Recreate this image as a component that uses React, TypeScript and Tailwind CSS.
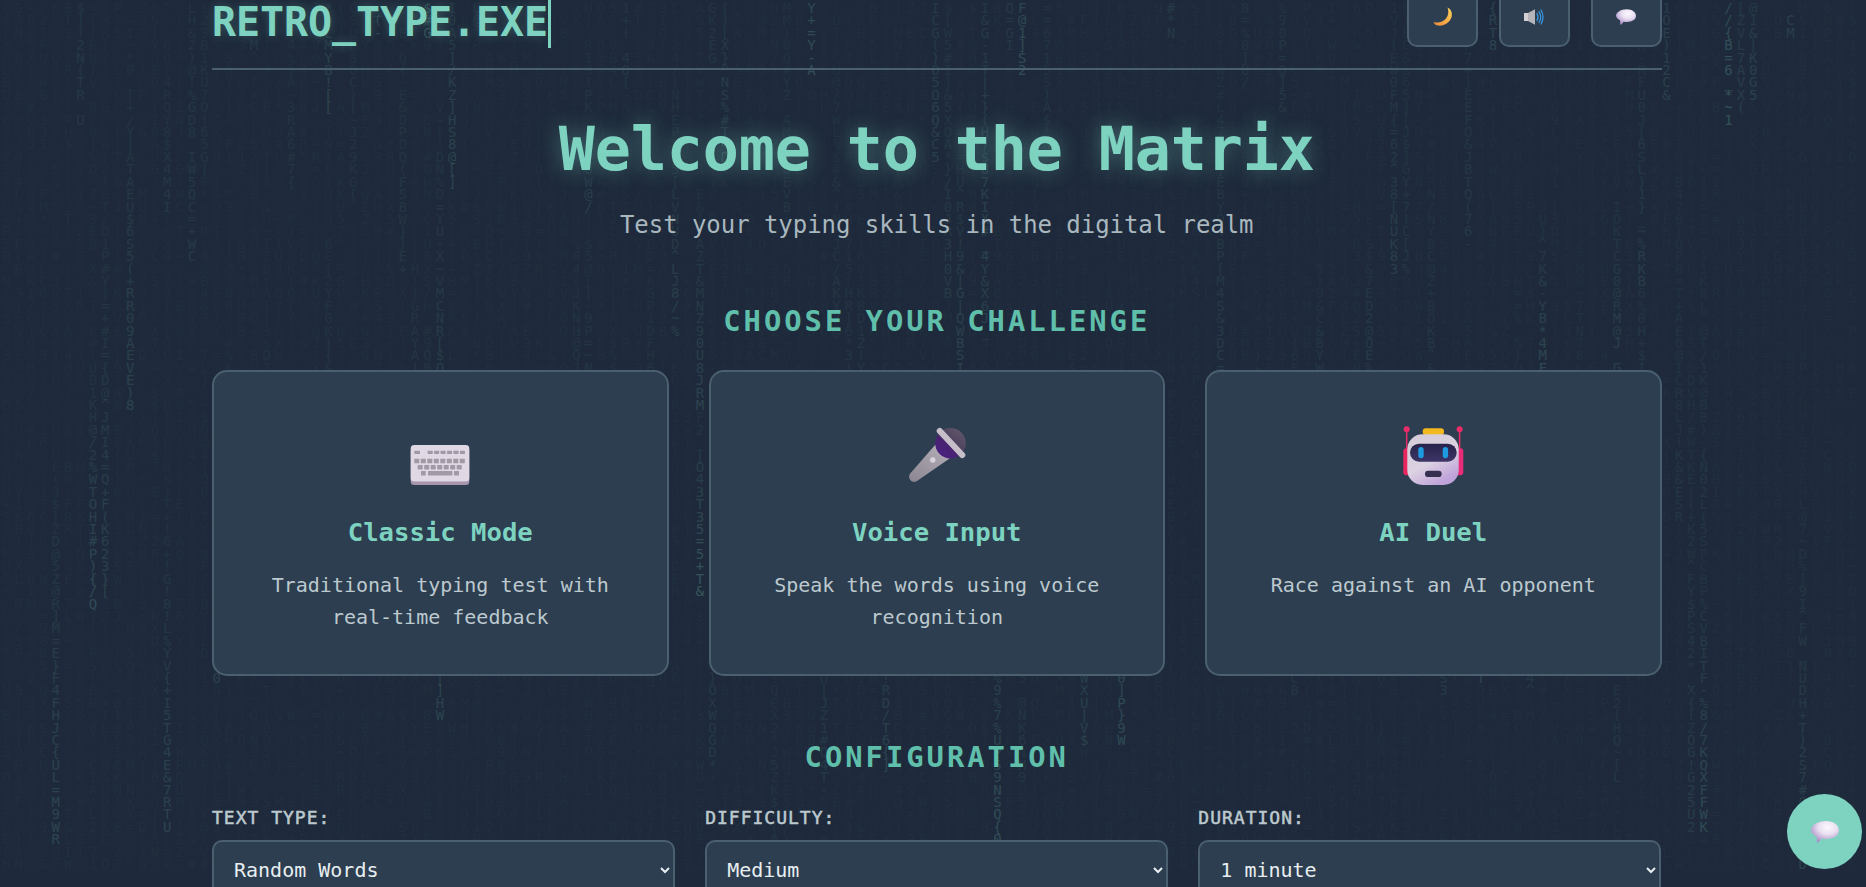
import React, { useMemo } from "react";

const FONT = "font-['DejaVu_Sans_Mono','Liberation_Mono',monospace]";

function MatrixRain() {
  const columns = useMemo(() => {
    let seed = 48271;
    const rnd = () => {
      seed = (seed * 16807) % 2147483647;
      return (seed - 1) / 2147483646;
    };
    const chars = "ABCDEFGHIJKLMNOPQRSTUVWXYZ0123456789!@#$%^&*()_+-=[]{}|/~";
    const rows = 70;
    return Array.from({ length: 150 }, () => {
      const alpha = Array.from({ length: rows }, () => 0.012 + rnd() * 0.018);
      const streaks = rnd() < 0.6 ? (rnd() < 0.3 ? 2 : 1) : 0;
      for (let s = 0; s < streaks; s++) {
        const end = Math.floor(rnd() * rows);
        const len = 12 + Math.floor(rnd() * 28);
        const peak = 0.035 + rnd() * rnd() * 0.22;
        for (let d = 0; d < len; d++) {
          const r = end - d;
          if (r >= 0) alpha[r] = Math.max(alpha[r], peak * (1 - d / len) + 0.02);
        }
      }
      const runs: { text: string; a: number }[] = [];
      alpha.forEach((a) => {
        const q = Math.round(a * 80) / 80;
        const c = chars[Math.floor(rnd() * chars.length)];
        const last = runs[runs.length - 1];
        if (last && last.a === q) last.text += "\n" + c;
        else runs.push({ text: (runs.length ? "\n" : "") + c, a: q });
      });
      return runs;
    });
  }, []);

  return (
    <div
      aria-hidden="true"
      className="absolute inset-0 pt-[2px] flex overflow-hidden text-[14px] leading-[12.4px] text-[#7dd3c0] font-['DejaVu_Sans_Mono',monospace] pointer-events-none"
    >
      {columns.map((runs, i) => (
        <div key={i} className="w-[12.4px] shrink-0 text-center whitespace-pre">
          {runs.map((r, j) => (
            <span key={j} style={{ opacity: r.a }}>
              {r.text}
            </span>
          ))}
        </div>
      ))}
    </div>
  );
}

function Moon() {
  return (
    <svg viewBox="0 0 20 20" className="w-[20px] h-[20px] ml-[1px]">
      <defs>
        <linearGradient id="moonG" x1="1" y1="0" x2="0" y2="1">
          <stop offset="0" stopColor="#fbd35a" />
          <stop offset="1" stopColor="#f08a3c" />
        </linearGradient>
      </defs>
      <path
        d="M14.5 .5C18 2 19.6 6 18.6 10 17 15.5 11 19.2 5.5 18.6 3 18.3 1 17 .5 15 5 16.5 10 15 13 11.5 15.5 8.5 16 4 14.5 .5Z"
        fill="url(#moonG)"
      />
    </svg>
  );
}

function Speaker() {
  return (
    <svg viewBox="0 0 20 16" className="w-[20px] h-[16px]">
      <rect x="0" y="4" width="4" height="8" fill="#d2d2d6" />
      <path d="M4 4 11 .2V15.8L4 12Z" fill="#b4b4ba" />
      <g fill="none" stroke="#3a9be8" strokeWidth="1.2" strokeLinecap="round">
        <path d="M13 4.5q2 3.5 0 7" />
        <path d="M15 2.6q3.4 5.4 0 10.8" />
        <path d="M17 1q4 7 0 14" />
      </g>
    </svg>
  );
}

function Bubble({ id, cls }: { id: string; cls: string }) {
  return (
    <svg viewBox="0 0 28 22" className={cls}>
      <defs>
        <radialGradient id={id} cx="0.6" cy="0.28" r="0.72">
          <stop offset="0" stopColor="#fbf8fd" />
          <stop offset="0.45" stopColor="#e9e0f1" />
          <stop offset="1" stopColor="#a98cc8" />
        </radialGradient>
      </defs>
      <path
        d="M15 0C22.5 0 28 4 28 9.3 28 14.8 22.5 18 15 18 13.5 18 12 17.9 10.6 17.5 9.4 19.4 7.6 21.4 5.8 22 6 20 6 17.6 5.6 15.6 2.4 14 .2 12 0 9.3 .2 4 7 0 15 0Z"
        fill={`url(#${id})`}
      />
    </svg>
  );
}

function Keyboard() {
  const rows: [number, number, number, number][] = [];
  for (let i = 0; i < 6; i++) rows.push([19.7 + i * 6.45, 26.7, 5, 3.4]);
  rows.push([6.3, 26.7, 5.7, 3.4]);
  for (let i = 0; i < 8; i++) rows.push([6.3 + i * 6.5, 34.7, 5, 4.6]);
  for (let i = 0; i < 7; i++) rows.push([9.7 + i * 6.5, 41, 5, 4.4]);
  rows.push([13, 47, 4.7, 4.6], [20, 47, 24.4, 4.6], [46, 47, 5, 4.6]);
  return (
    <svg viewBox="0 0 64 64" className="w-16 h-16">
      <rect x="2.7" y="24" width="58.6" height="37" rx="3.5" fill="#a795ad" />
      <rect x="2.7" y="21" width="58.6" height="36.5" rx="3.5" fill="#e0d8e4" />
      {rows.map(([x, y, w, h], i) => (
        <rect key={i} x={x} y={y} width={w} height={h} rx="0.6" fill="#a09aa5" />
      ))}
    </svg>
  );
}

function Mic() {
  return (
    <svg viewBox="0 0 64 64" className="w-16 h-16">
      <defs>
        <linearGradient id="micH" x1="0.9" y1="0" x2="0.1" y2="1">
          <stop offset="0" stopColor="#b5afb9" />
          <stop offset="1" stopColor="#8d8793" />
        </linearGradient>
        <linearGradient id="micB" x1="0.85" y1="0.1" x2="0.2" y2="0.9">
          <stop offset="0" stopColor="#5f5668" />
          <stop offset="0.45" stopColor="#4f4260" />
          <stop offset="0.6" stopColor="#47236f" />
          <stop offset="1" stopColor="#4a1f80" />
        </linearGradient>
      </defs>
      <path
        d="M30.5 20.5 46 33.5 12 57C9.5 58.5 6.8 58 5.2 56 3.6 54 3.7 51.6 5.2 49.6Z"
        fill="url(#micH)"
      />
      <circle cx="45.5" cy="19.3" r="15.3" fill="url(#micB)" />
      <path d="M34.8 7 57.2 31" stroke="#c6bfca" strokeWidth="6.2" strokeLinecap="round" />
      <circle cx="27.8" cy="36" r="2.7" fill="#d8d3dc" />
    </svg>
  );
}

function Robot() {
  return (
    <svg viewBox="0 0 64 64" className="w-16 h-16">
      <defs>
        <linearGradient id="robH" x1="0.1" y1="0.1" x2="0.6" y2="1">
          <stop offset="0" stopColor="#d5cdd9" />
          <stop offset="0.55" stopColor="#dcd2e2" />
          <stop offset="1" stopColor="#bfa2da" />
        </linearGradient>
        <linearGradient id="robV" x1="0" y1="0" x2="0" y2="1">
          <stop offset="0" stopColor="#26234a" />
          <stop offset="1" stopColor="#3e3566" />
        </linearGradient>
      </defs>
      <path d="M5.7 5.3V30M58.6 5.3V30" stroke="#ea2c68" strokeWidth="1.5" />
      <circle cx="5.7" cy="5.3" r="3" fill="#ea2c68" />
      <circle cx="58.6" cy="5.3" r="3" fill="#ea2c68" />
      <rect x="2.3" y="24.3" width="8" height="27" rx="3" fill="#e8275f" />
      <rect x="53.7" y="24.3" width="8.6" height="27" rx="3" fill="#ea2c78" />
      <rect x="21.7" y="4.3" width="21.3" height="6.6" rx="3" fill="#f2b91f" />
      <rect x="6.3" y="10.3" width="51.4" height="50.7" rx="15" fill="url(#robH)" />
      <rect x="9" y="19.7" width="46.7" height="18" rx="9" fill="url(#robV)" />
      <rect x="17.3" y="23" width="5.4" height="11.3" rx="2.7" fill="#1e9ae0" />
      <rect x="41.7" y="23" width="5.4" height="11.3" rx="2.7" fill="#1e9ae0" />
      <rect x="24" y="46.7" width="16.7" height="6.3" rx="3.1" fill="#352f50" />
    </svg>
  );
}

const cards = [
  { icon: <Keyboard />, title: "Classic Mode", desc: "Traditional typing test with real-time feedback" },
  { icon: <Mic />, title: "Voice Input", desc: "Speak the words using voice recognition" },
  { icon: <Robot />, title: "AI Duel", desc: "Race against an AI opponent" },
];

const selects = [
  { label: "TEXT TYPE:", options: ["Random Words", "Quotes", "Code"] },
  { label: "DIFFICULTY:", options: ["Medium", "Easy", "Hard"] },
  { label: "DURATION:", options: ["1 minute", "30 seconds", "2 minutes"] },
];

function HeaderButton({ children }: { children: React.ReactNode }) {
  return (
    <button className="w-[71px] h-[60px] flex items-center justify-center rounded-[10px] border-2 border-[#4a5f70] bg-[#2c3e50]">
      {children}
    </button>
  );
}

export default function App() {
  return (
    <div className={`relative h-[887px] overflow-hidden bg-[#1e2a3b] ${FONT}`}>
      <MatrixRain />
      <div className="relative ml-[212px] w-[1449.5px] -mt-[13px]">
        <header className="flex items-end justify-between pb-[20px] border-b-2 border-[#4a5f70]">
          <h1 className="h-[52px] text-[40px] leading-[52px] font-bold tracking-[-0.08px] text-[#7dd3c0] border-r-[3px] border-[#7dd3c0] [text-shadow:0_0_10px_rgba(125,211,192,0.25)]">
            RETRO_TYPE.EXE
          </h1>
          <div className="flex gap-[21px] mb-[1px]">
            <HeaderButton>
              <Moon />
            </HeaderButton>
            <HeaderButton>
              <Speaker />
            </HeaderButton>
            <HeaderButton>
              <Bubble id="bubA" cls="w-[20px] h-[16px]" />
            </HeaderButton>
          </div>
        </header>

        <h2 className="mt-[43px] text-center text-[60px] leading-[72px] font-bold tracking-[-0.12px] text-[#7dd3c0] [text-shadow:0_0_20px_rgba(125,211,192,0.4)]">
          Welcome to the Matrix
        </h2>
        <p className="mt-[24px] text-center text-[24px] leading-[32px] tracking-[-0.05px] text-[#a9b7bf]">
          Test your typing skills in the digital realm
        </p>

        <h3 className="mt-[60px] text-center text-[28.8px] leading-[40px] font-bold tracking-[3px] text-[#5fbfab]">
          CHOOSE YOUR CHALLENGE
        </h3>
        <div className="mt-[29px] grid grid-cols-3 gap-[40px]">
          {cards.map((c) => (
            <div
              key={c.title}
              className="h-[306px] p-[40px] rounded-[15px] border-2 border-[#4a5f70] bg-[#2c3e50] text-center"
            >
              <div className="h-[85px] pt-[12px] flex justify-center">{c.icon}</div>
              <h4 className="mt-[15px] text-[25.6px] leading-[40px] font-bold text-[#7dd3c0]">{c.title}</h4>
              <p className="mt-[17px] text-[20px] leading-[32px] text-[#bcc9ce]">{c.desc}</p>
            </div>
          ))}
        </div>

        <h3 className="mt-[61px] text-center text-[28.8px] leading-[40px] font-bold tracking-[3px] text-[#5fbfab]">
          CONFIGURATION
        </h3>
        <div className="mt-[29px] grid grid-cols-3 gap-[30px]">
          {selects.map((s) => (
            <div key={s.label}>
              <label className="block text-[18px] leading-[24px] font-normal tracking-[1px] text-[#bcc9ce] [-webkit-text-stroke:0.5px_#bcc9ce]">
                {s.label}
              </label>
              <select
                defaultValue={s.options[0]}
                className="mt-[10px] w-full h-[60px] px-[16px] rounded-[10px] border-2 border-[#4a5f70] bg-[#2c3e50] text-[20px] text-[#e8eef0]"
              >
                {s.options.map((o) => (
                  <option key={o}>{o}</option>
                ))}
              </select>
            </div>
          ))}
        </div>
      </div>

      <button className="absolute right-[4px] bottom-[18px] w-[75px] h-[75px] rounded-full bg-[#7dd3c0] flex items-center justify-center">
        <Bubble id="bubB" cls="w-[28px] h-[22px]" />
      </button>
    </div>
  );
}
